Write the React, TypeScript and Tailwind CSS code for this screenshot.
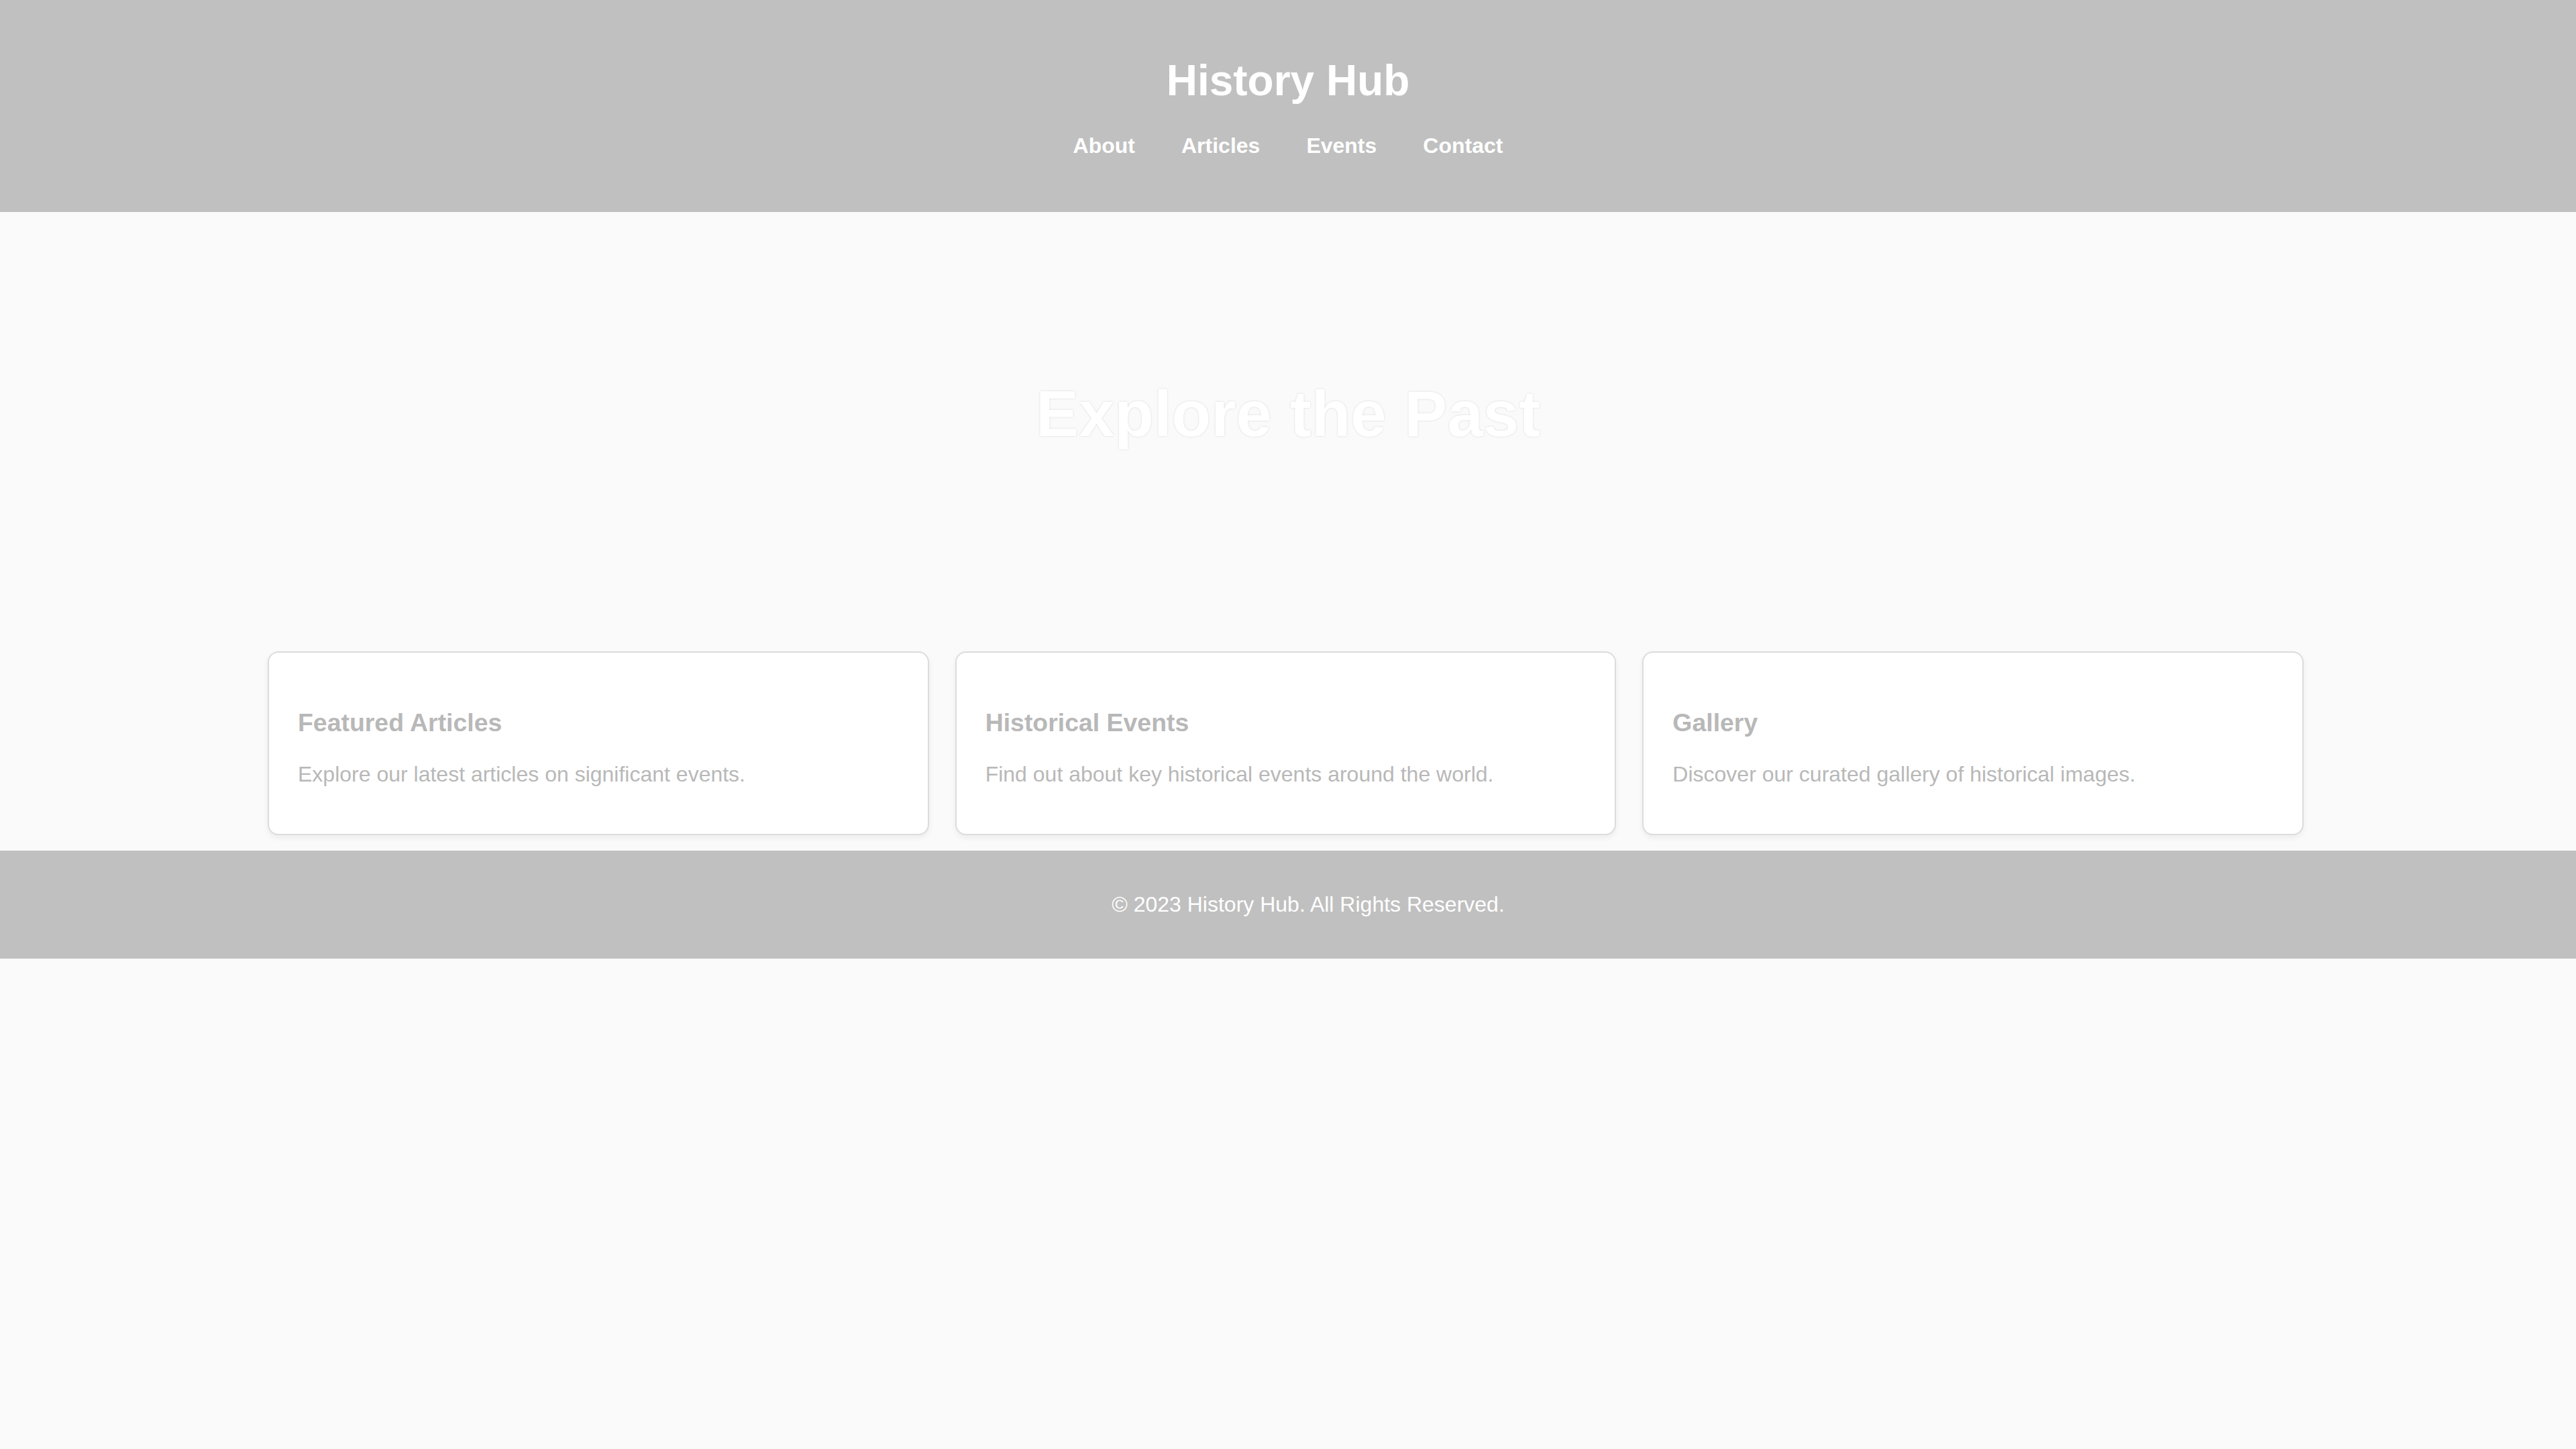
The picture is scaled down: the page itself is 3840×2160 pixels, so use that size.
import React from 'react'

const cards = [
  { title: 'Featured Articles', text: 'Explore our latest articles on significant events.' },
  { title: 'Historical Events', text: 'Find out about key historical events around the world.' },
  { title: 'Gallery', text: 'Discover our curated gallery of historical images.' },
]

const navLinks = ['About', 'Articles', 'Events', 'Contact']

export default function App() {
  return (
    <div className="min-h-screen bg-[#fafafa] font-['Liberation_Sans',Arial,sans-serif]">
      <header className="h-[316px] bg-[#c0c0c0] pt-[84px] text-center text-white">
        <h1 className="text-[64px] font-bold leading-[1.15]">History Hub</h1>
        <nav className="mt-[41px] flex justify-center gap-[69px]">
          {navLinks.map((link) => (
            <a key={link} href="#" className="text-[32px] font-bold leading-[1.15] text-white">
              {link}
            </a>
          ))}
        </nav>
      </header>

      <section className="pt-[246px] pb-[246px] text-center">
        <h2 className="text-[96px] font-bold leading-[1.15] text-white [text-shadow:0_0_3px_rgba(0,0,0,0.14)]">
          Explore the Past
        </h2>
      </section>

      <section className="pt-[53px] pb-[23px]">
        <div className="ml-[399px] grid w-[3035px] grid-cols-3 gap-[39px]">
          {cards.map((card) => (
            <div
              key={card.title}
              className="rounded-[16px] border-2 border-[#dcdcdc] bg-white px-[43px] pt-[46px] pb-[38px] shadow-[0_4px_8px_rgba(0,0,0,0.06)]"
            >
              <h3 className="my-[37px] text-[37.44px] font-bold leading-[1.15] text-[#b8b8b8]">{card.title}</h3>
              <p className="my-[32px] text-[32px] leading-[1.15] text-[#b8b8b8]">{card.text}</p>
            </div>
          ))}
        </div>
      </section>

      <footer className="bg-[#c0c0c0] py-[62px] pl-[60px] text-center">
        <p className="text-[32px] leading-[1.15] text-white">© 2023 History Hub. All Rights Reserved.</p>
      </footer>
    </div>
  )
}
